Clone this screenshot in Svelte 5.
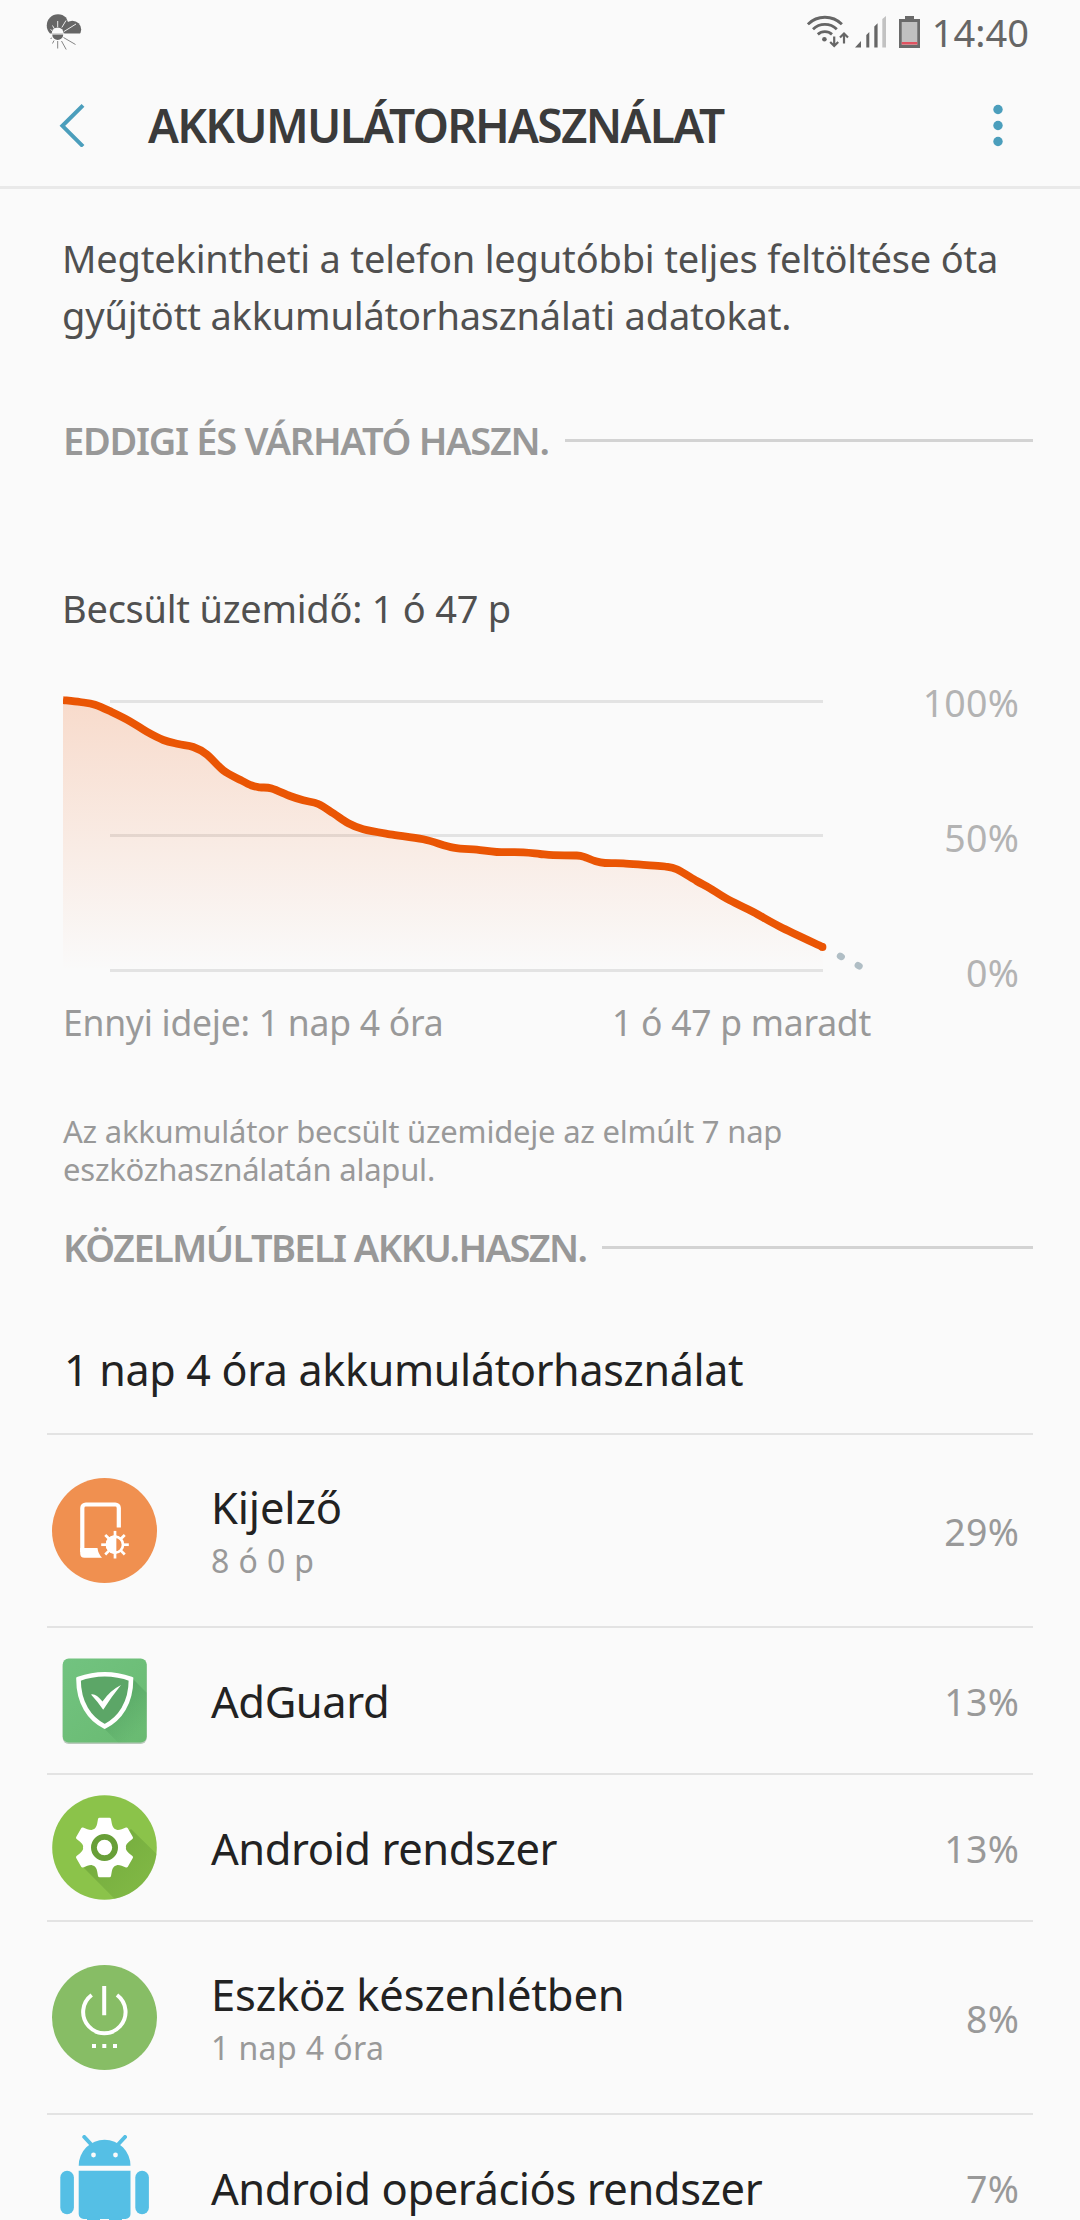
<script lang="ts">
  type Icon = 'display' | 'adguard' | 'gear' | 'power' | 'android';

  interface Usage {
    icon: Icon;
    name: string;
    time?: string;
    percent: number;
  }

  const usages: Usage[] = [
    { icon: 'display', name: 'Kijelző', time: '8 ó 0 p', percent: 29 },
    { icon: 'adguard', name: 'AdGuard', percent: 13 },
    { icon: 'gear', name: 'Android rendszer', percent: 13 },
    { icon: 'power', name: 'Eszköz készenlétben', time: '1 nap 4 óra', percent: 8 },
    { icon: 'android', name: 'Android operációs rendszer', percent: 7 }
  ];

  // Battery level history, in chart units
  const points: [number, number][] = [
    [0, 23], [17, 25], [32, 27.7], [48.7, 35], [67, 44.3], [83.7, 54.7], [100.3, 63],
    [115.3, 67], [130.3, 70], [143.7, 77.3], [160.3, 93.3], [177, 102.7], [188.7, 108.5],
    [197, 110.3], [208.7, 111.5], [227, 119], [240.3, 123.3], [255.3, 127], [270.3, 136.3],
    [285.3, 146.3], [300.3, 152.3], [327, 157.3], [360.3, 162.3], [390.3, 170.7], [413.7, 172.7],
    [433.7, 175], [460.3, 175.3], [477, 177], [490.3, 178.2], [513.7, 178.5], [522, 180.2],
    [532, 184], [542, 186], [560.3, 186.3], [583.7, 188.2], [602, 189.5], [613.7, 192.3],
    [633.7, 204], [647, 211.3], [663.7, 221.7], [690.3, 235], [717, 249.7], [759.7, 270]
  ];

  // Smooth curve through the points
  function toPath(pts: [number, number][]) {
    let d = `M${pts[0][0]} ${pts[0][1]}`;
    for (let i = 0; i < pts.length - 1; i++) {
      const p0 = pts[i - 1] ?? pts[i];
      const p1 = pts[i];
      const p2 = pts[i + 1];
      const p3 = pts[i + 2] ?? p2;
      const c1 = [p1[0] + (p2[0] - p0[0]) / 6, p1[1] + (p2[1] - p0[1]) / 6];
      const c2 = [p2[0] - (p3[0] - p1[0]) / 6, p2[1] - (p3[1] - p1[1]) / 6];
      d += `C${c1[0]} ${c1[1]} ${c2[0]} ${c2[1]} ${p2[0]} ${p2[1]}`;
    }
    return d;
  }

  const line = toPath(points);
  const area = `${line}V294H0Z`;
</script>

<div class="screen">
  <!-- Status bar -->
  <div class="status-bar">
    <svg class="weather" width="36" height="36" viewBox="0 0 36 36">
      <g fill="#666">
        <path d="M4 19.4A11.2 11.2 0 1 1 20 3.6L27 19.4z"/>
        <circle cx="26.3" cy="15.6" r="8.9"/>
      </g>
      <path d="M17 19.5h19v6H17z" fill="#fafafa"/>
      <path d="M5.7 19.6a6 6 0 0 1 12 0z" fill="#fafafa"/>
      <path d="M6.2 20.4a5.5 5.5 0 0 0 11 0z" fill="#666"/>
      <path d="M11.7 7v6M20 6.5l-4.2 7M30 10l-12 7.5M6.5 11.5l2 3.5M4.5 15.5l2 1.5" stroke="#fafafa" stroke-width="0.9"/>
      <path d="M11.7 27v7.5M15.5 27l4.7 8.5M17.5 23.5l12 7M8 26.5l-1.5 3M6 24l-1.5.5" stroke="#777" stroke-width="0.9"/>
    </svg>
    <div class="status-right">
      <svg class="wifi" width="42" height="34" viewBox="0 0 42 34" fill="none" stroke="#666" stroke-width="2.8">
        <path d="M.9 9.3a24 24 0 0 1 34 0"/>
        <path d="M6 14.2a17 17 0 0 1 23.8 0"/>
        <path d="M10.8 19.4a10.5 10.5 0 0 1 14.2 0"/>
        <circle cx="17.4" cy="24.3" r="2.3" fill="#666" stroke="none"/>
        <path d="M27.2 21.5v9M23.2 27l4 4l4-4M37 28.500V19.500M33 22.500l4-4l4 4" stroke-width="2.2"/>
      </svg>
      <svg class="signal" width="32" height="32" viewBox="0 0 32 32" fill="#666">
        <path d="M0 31.500L6 25v6.500zM11.300 19l3-3v15.500h-3zM19.300 10.500l3.300-3.300v24.300h-3.300z"/>
        <path d="M27.300 3l3.700-3v31.500h-3.700z" fill="#c2c2c2"/>
      </svg>
      <svg class="battery" width="21" height="32" viewBox="0 0 21 32">
        <path d="M6 0h9v3h6v29H0V3h6z" fill="#6a6a6a"/>
        <path d="M2.700 6h15.600v23H2.700z" fill="#c0c0c0"/>
        <path d="M2.700 26h15.600v2.500H2.700z" fill="#e05260"/>
      </svg>
      <span class="clock">14:40</span>
    </div>
  </div>

  <!-- Header -->
  <header class="header">
    <svg class="back" width="26" height="44" viewBox="0 0 26 44" fill="none" stroke="#4b9ebc" stroke-width="4">
      <path d="M24 2.300L3.400 22.800L24 43.300"/>
    </svg>
    <h1>AKKUMULÁTORHASZNÁLAT</h1>
    <svg class="more" width="12" height="44" viewBox="0 0 12 44" fill="#4b9ebc">
      <circle cx="6" cy="6.500" r="4.700"/>
      <circle cx="6" cy="22.500" r="4.700"/>
      <circle cx="6" cy="38.500" r="4.700"/>
    </svg>
  </header>

  <p class="intro">Megtekintheti a telefon legutóbbi teljes feltöltése óta<br>gyűjtött akkumulátorhasználati adatokat.</p>

  <h2 class="section past">EDDIGI ÉS VÁRHATÓ HASZN.</h2>

  <p class="estimate">Becsült üzemidő: 1 ó 47 p</p>

  <!-- Chart -->
  <div class="chart">
    <svg width="817" height="320" viewBox="0 0 817 320">
      <defs>
        <linearGradient id="fill" x1="0" y1="23" x2="0" y2="294" gradientUnits="userSpaceOnUse">
          <stop offset="0" stop-color="#ee5504" stop-opacity="0.19"/>
          <stop offset="1" stop-color="#ee5504" stop-opacity="0"/>
        </linearGradient>
      </defs>
      <path d="M47 24.5H760M47 158.5H760M47 293.5H760" stroke="#e3e3e3" stroke-width="3"/>
      <path d={area} fill="url(#fill)"/>
      <path d={line} fill="none" stroke="#ea5504" stroke-width="7.8"/>
      <circle cx="759.5" cy="270" r="3.9" fill="#ea5504"/>
      <path d="M777.2 279l1.3.8M795 288.4l1.3.8" stroke="#b0bec5" stroke-width="6.8" stroke-linecap="round"/>
    </svg>
    <div class="levels">
      <span>100%</span>
      <span>50%</span>
      <span>0%</span>
    </div>
  </div>
  <div class="axis">
    <span>Ennyi ideje: 1 nap 4 óra</span>
    <span>1 ó 47 p maradt</span>
  </div>

  <p class="note">Az akkumulátor becsült üzemideje az elmúlt 7 nap<br>eszközhasználatán alapul.</p>

  <h2 class="section recent">KÖZELMÚLTBELI AKKU.HASZN.</h2>

  <p class="summary">1 nap 4 óra akkumulátorhasználat</p>

  <!-- Usage list -->
  <ul class="list">
    {#each usages as usage}
      <li class="row" class:tall={usage.time}>
        <svg class="icon" width="105" height="105" viewBox="0 0 105 105">
          {#if usage.icon === 'display'}
            <circle cx="52.5" cy="52.5" r="52.5" fill="#f09050"/>
            <path d="M66.8 49.5V30a3.5 3.5 0 0 0-3.5-3.5H33.8a3.5 3.5 0 0 0-3.5 3.5V74" fill="none" stroke="#fff" stroke-width="4.2"/>
            <path d="M28.2 70H45.5Q46 75.5 50 79.7H32.5Q28.2 79.7 28.2 75.5Z" fill="#fff"/>
            <g transform="translate(63 66.7)" stroke="#fff" stroke-width="2.7">
              <circle r="8" fill="none"/>
              <path d="M0-8a8 8 0 0 0 0 16z" fill="#fff"/>
              {#each [0, 45, 90, 135, 180, 225, 270, 315] as angle}
                <path d="M0-8V-13.8" transform="rotate({angle})"/>
              {/each}
            </g>
          {:else if usage.icon === 'adguard'}
            <defs>
              <linearGradient id="guard" x1="0" y1="0" x2="1" y2="1">
                <stop offset="0" stop-color="#72c380"/>
                <stop offset="1" stop-color="#69ba71"/>
              </linearGradient>
              <linearGradient id="shade" x1="50" y1="50" x2="86" y2="86" gradientUnits="userSpaceOnUse">
                <stop offset="0" stop-color="#4c9a5b"/>
                <stop offset="1" stop-color="#4c9a5b" stop-opacity="0"/>
              </linearGradient>
            </defs>
            <rect x="10.7" y="12" width="84" height="84" rx="6" fill="#b9c9bb"/>
            <rect x="10.7" y="10.5" width="84" height="84" rx="6" fill="url(#guard)"/>
            <path d="M79.5 29.5L94.7 44.7V88.5a6 6 0 0 1-6 6H66.2L52.7 81Z" fill="url(#shade)" opacity="0.7"/>
            <path d="M26.5 31Q52.7 21.5 79 31C79 55 68 71 52.7 78.5C37.5 71 26.5 55 26.5 31Z" fill="#5ca667" stroke="#fff" stroke-width="4.6"/>
            <path d="M39 46.5Q43.5 45 50.5 53.5Q58 42.5 69 37Q60 48 51.2 61.8Q46 54 39 46.5Z" fill="#fff"/>
          {:else if usage.icon === 'gear'}
            <defs>
              <linearGradient id="cast" x1="52" y1="52" x2="86" y2="86" gradientUnits="userSpaceOnUse">
                <stop offset="0" stop-color="#689f38" stop-opacity="0.6"/>
                <stop offset="1" stop-color="#689f38" stop-opacity="0.35"/>
              </linearGradient>
            </defs>
            <circle cx="52.5" cy="52.5" r="52.3" fill="#8bc34a"/>
            <path d="M79 34L104.6 59A52.3 52.3 0 0 1 62.5 103.8L32 73Z" fill="url(#cast)"/>
            <g transform="translate(52.5 52.5)">
              <circle r="21.5" fill="#fff"/>
              {#each [0, 60, 120, 180, 240, 300] as angle}
                <path d="M-9.5-19Q-7.8-21-7.3-24L-6.5-28.5Q-6.2-29.8-5-29.8H5Q6.2-29.8 6.5-28.5L7.3-24Q7.8-21 9.5-19L0 0Z" fill="#fff" transform="rotate({angle})"/>
              {/each}
              <circle r="10.6" fill="#fff" stroke="#689f38" stroke-width="5.8"/>
            </g>
          {:else if usage.icon === 'power'}
            <circle cx="52.5" cy="52.5" r="52.5" fill="#87bd65"/>
            <path d="M39.7 30A21.2 21.2 0 1 0 65 30M52.2 21V50.3" fill="none" stroke="#fff" stroke-width="4"/>
            <path d="M40 79h4v4h-4zM50.3 79h4v4h-4zM61 79h4v4h-4z" fill="#fff"/>
          {:else}
            <g fill="#55bfe5">
              <path d="M26.7 30.7a25.9 26 0 0 1 51.8 0z"/>
              <path d="M32.3 2l6.5 7M73 2l-6.5 7" stroke="#55bfe5" stroke-width="4" stroke-linecap="round"/>
              <path d="M26.7 35.7H78.5V79a5 5 0 0 1-5 5H70v14a6.5 6.5 0 0 1-13 0V84H48v14a6.5 6.5 0 0 1-13 0V84H31.700a5 5 0 0 1-5-5z"/>
              <rect x="8.3" y="35.7" width="13.6" height="43.5" rx="6.8"/>
              <rect x="83.3" y="35.7" width="13.6" height="43.5" rx="6.8"/>
            </g>
            <circle cx="41.5" cy="20" r="2.4" fill="#fafafa"/>
            <circle cx="63.500" cy="20" r="2.4" fill="#fafafa"/>
          {/if}
        </svg>
        <div class="label">
          <span class="name">{usage.name}</span>
          {#if usage.time}
            <span class="time">{usage.time}</span>
          {/if}
        </div>
        <span class="percent">{usage.percent}%</span>
      </li>
    {/each}
  </ul>
</div>

<style>
  :global(body) {
    margin: 0;
    background: #fafafa;
  }

  .screen {
    width: 1080px;
    height: 2220px;
    overflow: hidden;
    background: #fafafa;
    color: #222;
    font-family: 'Noto Sans', sans-serif;
  }

  h1,
  h2,
  p,
  ul {
    margin: 0;
    padding: 0;
  }

  svg {
    display: block;
    flex: none;
  }

  /* Status bar */
  .status-bar {
    display: flex;
    justify-content: space-between;
    height: 64px;
    padding: 0 51px 0 46px;
  }

  .weather {
    margin-top: 14px;
  }

  .status-right {
    display: flex;
    align-items: center;
  }

  .signal {
    margin-left: 6px;
  }

  .battery {
    margin-left: 12px;
  }

  .clock {
    margin-left: 12px;
    font-size: 38px;
    line-height: 64px;
    color: #666;
  }

  /* Header */
  .header {
    display: flex;
    align-items: center;
    height: 122px;
    padding: 0 76px 0 59px;
    border-bottom: 3px solid #e9e9e9;
  }

  h1 {
    flex: 1;
    margin-left: 63px;
    font-size: 46px;
    font-weight: 600;
    letter-spacing: -1.7px;
    color: #3b3b3b;
  }

  .intro {
    padding: 41px 0 0 62px;
    font-size: 38px;
    line-height: 57px;
    letter-spacing: -0.18px;
    color: #505050;
  }

  .section {
    display: flex;
    align-items: center;
    padding: 0 47px 0 63px;
    font-size: 38px;
    font-weight: 600;
    line-height: 58px;
    color: #989898;
  }

  .section::after {
    content: '';
    flex: 1;
    height: 3px;
    margin-left: 16px;
    background: #d3d3d3;
  }

  .past {
    margin-top: 67px;
    letter-spacing: -1.3px;
  }

  .recent {
    margin-top: 30px;
    letter-spacing: -1.62px;
  }

  .estimate {
    margin-top: 110px;
    padding-left: 62px;
    font-size: 38px;
    line-height: 58px;
    letter-spacing: -0.25px;
    color: #505050;
  }

  /* Chart */
  .chart {
    display: flex;
    justify-content: space-between;
    height: 320px;
    margin-top: 40px;
    padding: 0 61px 0 63px;
  }

  .levels {
    display: flex;
    flex-direction: column;
    gap: 85px;
    padding-top: 1px;
    font-size: 37.5px;
    line-height: 50px;
    letter-spacing: 0.2px;
    text-align: right;
    color: #b3b3b3;
  }

  .axis {
    display: flex;
    justify-content: space-between;
    padding: 0 209px 0 63px;
    font-size: 35.5px;
    line-height: 50px;
    letter-spacing: -0.25px;
    color: #999;
  }

  .note {
    margin-top: 65px;
    padding-left: 63px;
    font-size: 31px;
    line-height: 38px;
    letter-spacing: -0.22px;
    color: #999;
  }

  .summary {
    margin-top: 64px;
    padding-left: 64px;
    font-size: 43px;
    line-height: 60px;
    letter-spacing: -0.3px;
  }

  /* Usage list */
  .list {
    margin: 33px 47px 0;
    list-style: none;
  }

  .row {
    display: flex;
    align-items: center;
    box-sizing: border-box;
    height: 147px;
    padding: 0 14px 0 5px;
    border-top: 2px solid #e3e3e3;
  }

  .row.tall {
    height: 193px;
  }

  .label {
    display: flex;
    flex: 1;
    flex-direction: column;
    margin-left: 54px;
  }

  .tall .label {
    padding-top: 2px;
  }

  .name {
    font-size: 43.5px;
    line-height: 58px;
    letter-spacing: -0.45px;
  }

  .tall .name {
    letter-spacing: -0.15px;
  }

  .time {
    font-size: 32px;
    line-height: 50px;
    letter-spacing: 0.4px;
    color: #999;
  }

  .percent {
    padding-top: 1px;
    font-size: 37.5px;
    letter-spacing: 0.2px;
    color: #999;
  }
</style>
